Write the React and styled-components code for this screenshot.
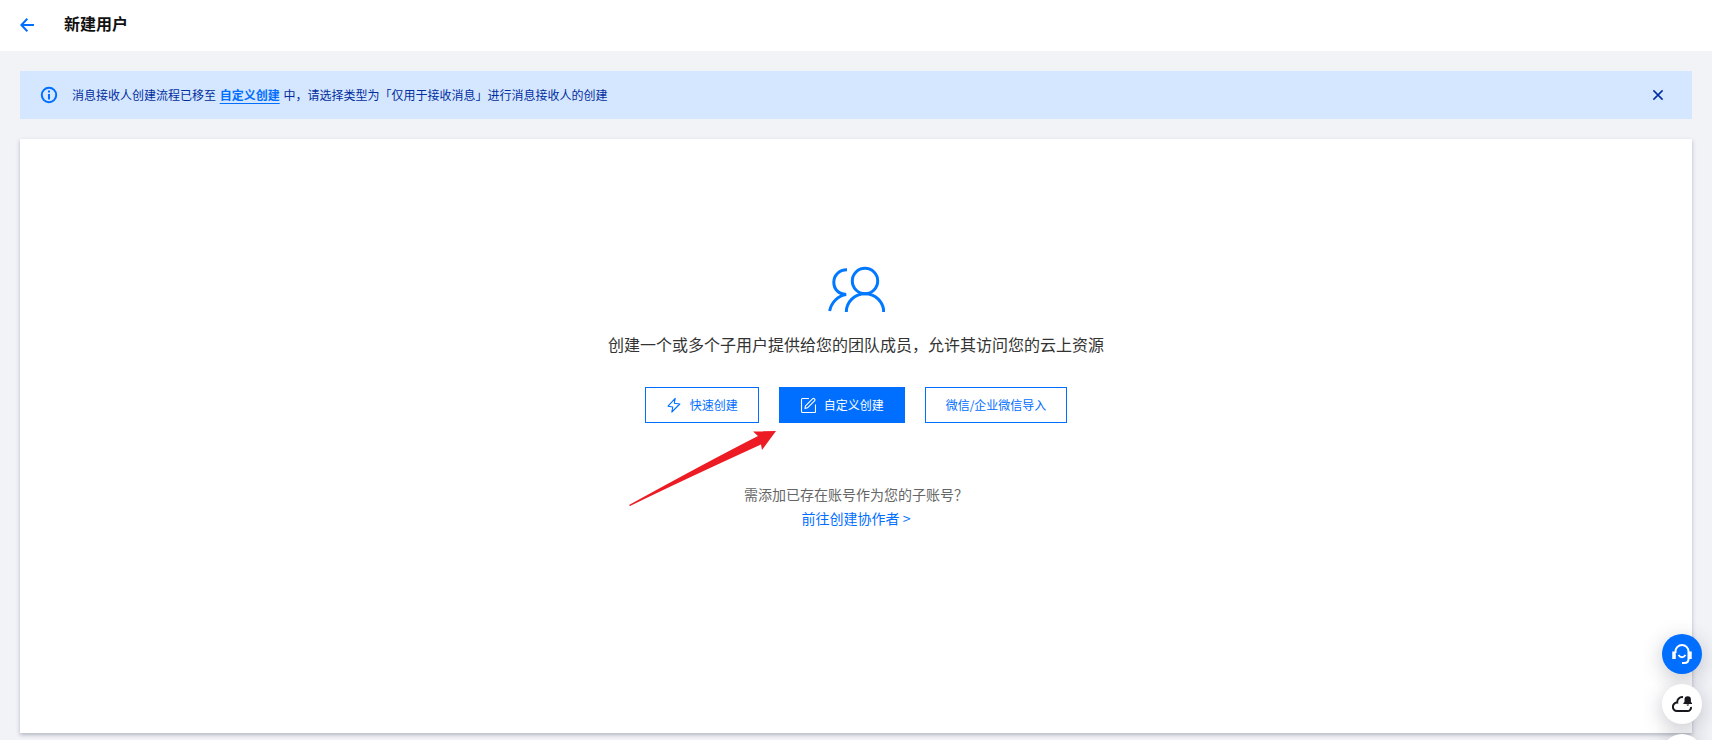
import React, { useState } from "react";
import styled, { createGlobalStyle } from "styled-components";

const Global = createGlobalStyle`
  *, *::before, *::after { box-sizing: border-box; }
  html { background: #f2f3f7; }
  body {
    margin: 0;
    color: #333;
    font: 12px/18px "Noto Sans CJK SC", sans-serif;
  }
  button { font: inherit; cursor: pointer; }
`;

const Page = styled.div`
  display: flex;
  flex-direction: column;
  min-height: 100vh;
`;

const Header = styled.header`
  display: flex;
  align-items: center;
  gap: 30px;
  height: 51px;
  padding: 0 20px 2px;
  background: #fff;
`;

const BackLink = styled.a`
  display: flex;
  color: #006eff;
`;

const Title = styled.h1`
  margin: 0;
  padding-bottom: 4px;
  color: #111;
  font-size: 16px;
  line-height: 24px;
  font-weight: 700;
`;

const Main = styled.main`
  display: flex;
  flex: 1;
  flex-direction: column;
  gap: 20px;
  padding: 20px 20px 7px;
`;

const Alert = styled.div`
  display: flex;
  align-items: center;
  gap: 14px;
  height: 48px;
  padding: 0 26px 0 20px;
  background: #d5e7ff;
  color: #002da0;
`;

const AlertText = styled.p`
  flex: 1;
  margin: 0;
`;

const AlertLink = styled.a`
  margin: 0 1px;
  color: #006eff;
  font-weight: 700;
  text-decoration: underline;
  text-underline-offset: 3px;
`;

const CloseButton = styled.button`
  display: flex;
  padding: 0;
  border: 0;
  background: none;
  color: #002da0;
`;

const Card = styled.section`
  display: flex;
  flex: 1;
  flex-direction: column;
  align-items: center;
  padding: 127px 20px 20px;
  background: #fff;
  box-shadow: 0 2px 4px rgba(54, 58, 80, 0.32);
`;

const Lead = styled.p`
  margin: 20px 0 31px;
  font-size: 16px;
  line-height: 24px;
`;

const Actions = styled.div`
  position: relative;
  display: flex;
  gap: 20px;
`;

const Button = styled.button`
  display: flex;
  align-items: center;
  gap: 8px;
  height: 36px;
  padding: 0 20px;
  border: 1px solid #006eff;
  background: ${(p) => (p.$primary ? "#006eff" : "#fff")};
  color: ${(p) => (p.$primary ? "#fff" : "#006eff")};
  white-space: nowrap;
`;

const Pointer = styled.svg`
  position: absolute;
  top: 43px;
  left: -16px;
  pointer-events: none;
`;

const Hint = styled.p`
  margin: 59px 0 0;
  color: #666;
  font-size: 14px;
  line-height: 24px;
`;

const HintLink = styled.a`
  color: #006eff;
  font-size: 14px;
  line-height: 24px;
  text-decoration: none;
`;

/* The last button hangs below the fold of the window. */
const Dock = styled.aside`
  position: fixed;
  right: 10px;
  bottom: -34px;
  display: flex;
  flex-direction: column;
  gap: 10px;
`;

const DockButton = styled.button`
  display: flex;
  align-items: center;
  justify-content: center;
  width: 40px;
  height: 40px;
  padding: 0;
  border: 0;
  border-radius: 50%;
  background: ${(p) => (p.$primary ? "#006eff" : "#fff")};
  color: ${(p) => (p.$primary ? "#fff" : "#16181d")};
  box-shadow: 0 5px 20px rgba(54, 58, 80, 0.28);
`;

const BackIcon = () => (
  <svg width="14" height="14" viewBox="0 0 14 14" fill="none" stroke="currentColor" strokeWidth="2">
    <path d="M7.3 0.8 1.4 7l5.9 6.2M1.6 7H14" />
  </svg>
);

const InfoIcon = () => (
  <svg width="18" height="18" viewBox="0 0 18 18" fill="none" stroke="#006eff" strokeWidth="2">
    <circle cx="9" cy="9" r="7.2" />
    <path d="M9 4.5v2M9 8v5.5" />
  </svg>
);

const CloseIcon = () => (
  <svg width="16" height="16" viewBox="0 0 16 16" fill="none" stroke="currentColor" strokeWidth="1.5">
    <path d="m3.4 3.4 9.2 9.2M12.6 3.4l-9.2 9.2" />
  </svg>
);

const UsersIcon = () => (
  <svg width="58" height="46" viewBox="-1 0 58 46" fill="none" stroke="#0078ff" strokeWidth="3">
    <circle cx="37" cy="15" r="12.7" />
    <path d="M18.3 46a18.7 18.3 0 0 1 37.4 0" />
    <path d="M19 3.8C11 3.8 5.8 9.5 5.8 16.2c0 7 4.8 12 12.4 12.2C10.5 29.5 3.400 36 1.600 45" />
  </svg>
);

const BoltIcon = () => (
  <svg width="16" height="16" viewBox="0 0 16 16" fill="none" stroke="currentColor" strokeWidth="1.1" strokeLinejoin="round">
    <path d="M9.2 1.3 2 9.2l4.8.8L5.8 15 13.8 7 8.3 6.200Z" />
  </svg>
);

const EditIcon = () => (
  <svg width="16" height="16" viewBox="0 0 16 16" fill="none" stroke="currentColor" strokeWidth="1.1" strokeLinejoin="round">
    <path d="M9 1.500H2.500a1 1 0 0 0-1 1v12a1 1 0 0 0 1 1h12a1 1 0 0 0 1-1V7.500" />
    <path d="m5.500 8.800 7-7q1-1 2 0t0 2l-7 7-2.500.700Z" />
  </svg>
);

const HeadsetIcon = () => (
  <svg width="20" height="20" viewBox="0 0 20 20" fill="none" stroke="currentColor" strokeWidth="2">
    <path d="M3.500 9V7.500a6.500 6.500 0 0 1 13 0V15q0 4-4 4H10" />
    <path d="M6.500 11q3.500 4.500 7 0" />
    <path d="M2 7.500V15M18 7.500V15" strokeWidth="3.500" />
  </svg>
);

const CloudIcon = () => (
  <svg width="20" height="18" viewBox="0 0 20 18" fill="none" stroke="currentColor" strokeWidth="2">
    <path d="M11 2.200A5 5 0 0 0 5.200 7.600A4.200 4.200 0 0 0 5 16h10.500a3.400 3.400 0 0 0 3.400-4" />
    <path d="M12.500 7V4.500a3.200 3.200 0 0 1 6.400 0V7l1.100 1v1h-8.600V8ZM14.500 9.500h2.600q-.300 1.200-1.300 1.200t-1.300-1.200Z" fill="currentColor" stroke="none" />
  </svg>
);

export default function App() {
  const [alertOpen, setAlertOpen] = useState(true);
  return (
    <Page>
      <Global />
      <Header>
        <BackLink href="#" aria-label="返回"><BackIcon /></BackLink>
        <Title>新建用户</Title>
      </Header>
      <Main>
        {alertOpen && (
          <Alert role="status">
            <InfoIcon />
            <AlertText>
              消息接收人创建流程已移至 <AlertLink href="#custom">自定义创建</AlertLink> 中，请选择类型为「仅用于接收消息」进行消息接收人的创建
            </AlertText>
            <CloseButton aria-label="关闭" onClick={() => setAlertOpen(false)}><CloseIcon /></CloseButton>
          </Alert>
        )}
        <Card>
          <UsersIcon />
          <Lead>创建一个或多个子用户提供给您的团队成员，允许其访问您的云上资源</Lead>
          <Actions>
            <Button><BoltIcon />快速创建</Button>
            <Button $primary><EditIcon />自定义创建</Button>
            <Button>微信/企业微信导入</Button>
            <Pointer width="148" height="78" viewBox="0 0 148 78" aria-hidden="true">
              <path fill="#ed1c24" d="M147 1 124 1.500l5 4.500Q78 32 0 75l1 1Q50 52 132 14.500l1 5.500Z" />
            </Pointer>
          </Actions>
          <Hint>需添加已存在账号作为您的子账号？</Hint>
          <HintLink href="#collaborator">前往创建协作者 &gt;</HintLink>
        </Card>
      </Main>
      <Dock>
        <DockButton $primary aria-label="在线客服"><HeadsetIcon /></DockButton>
        <DockButton aria-label="云助手"><CloudIcon /></DockButton>
        <DockButton aria-label="更多" />
      </Dock>
    </Page>
  );
}
